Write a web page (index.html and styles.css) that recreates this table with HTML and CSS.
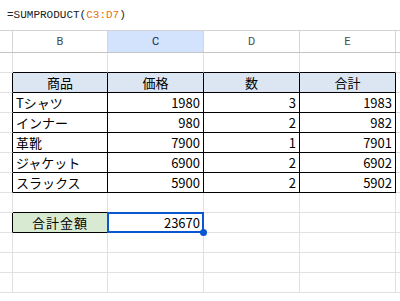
FILE: index.html
```html
<!DOCTYPE html>
<html lang="ja">
<head>
    <meta charset="UTF-8">
    <title>SUMPRODUCT</title>
    <link rel="stylesheet" href="styles.css">
</head>
<body>

    <!-- Formula bar -->
    <div class="formula-bar">
        <span>=SUMPRODUCT(</span><span class="ref">C3:D7</span><span>)</span>
    </div>

    <!-- Column headers -->
    <div class="row col-head">
        <div class="cell gutter"></div>
        <div class="cell">B</div>
        <div class="cell active">C</div>
        <div class="cell">D</div>
        <div class="cell">E</div>
        <div class="cell"></div>
    </div>

    <div class="row">
        <div class="cell gutter"></div>
        <div class="cell edge-b"></div>
        <div class="cell edge-b"></div>
        <div class="cell edge-b"></div>
        <div class="cell edge-b"></div>
        <div class="cell"></div>
    </div>

    <!-- Price table -->
    <div class="row">
        <div class="cell gutter edge-r"></div>
        <div class="cell tb th">商品</div>
        <div class="cell tb th">価格</div>
        <div class="cell tb th">数</div>
        <div class="cell tb th">合計</div>
        <div class="cell"></div>
    </div>
    <div class="row">
        <div class="cell gutter edge-r"></div>
        <div class="cell tb">Tシャツ</div>
        <div class="cell tb num">1980</div>
        <div class="cell tb num">3</div>
        <div class="cell tb num">1983</div>
        <div class="cell"></div>
    </div>
    <div class="row">
        <div class="cell gutter edge-r"></div>
        <div class="cell tb">インナー</div>
        <div class="cell tb num">980</div>
        <div class="cell tb num">2</div>
        <div class="cell tb num">982</div>
        <div class="cell"></div>
    </div>
    <div class="row">
        <div class="cell gutter edge-r"></div>
        <div class="cell tb">革靴</div>
        <div class="cell tb num">7900</div>
        <div class="cell tb num">1</div>
        <div class="cell tb num">7901</div>
        <div class="cell"></div>
    </div>
    <div class="row">
        <div class="cell gutter edge-r"></div>
        <div class="cell tb">ジャケット</div>
        <div class="cell tb num">6900</div>
        <div class="cell tb num">2</div>
        <div class="cell tb num">6902</div>
        <div class="cell"></div>
    </div>
    <div class="row">
        <div class="cell gutter edge-r"></div>
        <div class="cell tb">スラックス</div>
        <div class="cell tb num">5900</div>
        <div class="cell tb num">2</div>
        <div class="cell tb num">5902</div>
        <div class="cell"></div>
    </div>

    <div class="row">
        <div class="cell gutter"></div>
        <div class="cell edge-b"></div>
        <div class="cell"></div>
        <div class="cell"></div>
        <div class="cell"></div>
        <div class="cell"></div>
    </div>

    <!-- Total -->
    <div class="row">
        <div class="cell gutter edge-r"></div>
        <div class="cell tb total-label">合計金額</div>
        <div class="cell num selected">23670</div>
        <div class="cell"></div>
        <div class="cell"></div>
        <div class="cell"></div>
    </div>

    <div class="row">
        <div class="cell gutter"></div>
        <div class="cell"></div>
        <div class="cell"></div>
        <div class="cell"></div>
        <div class="cell"></div>
        <div class="cell"></div>
    </div>
    <div class="row">
        <div class="cell gutter"></div>
        <div class="cell"></div>
        <div class="cell"></div>
        <div class="cell"></div>
        <div class="cell"></div>
        <div class="cell"></div>
    </div>
    <div class="row">
        <div class="cell gutter"></div>
        <div class="cell"></div>
        <div class="cell"></div>
        <div class="cell"></div>
        <div class="cell"></div>
        <div class="cell"></div>
    </div>

</body>
</html>
```

FILE: styles.css
```css
body {
    margin: 0;
    background: #fff;
    font-family: 'Noto Sans CJK JP', sans-serif;
    overflow: hidden;
}
.formula-bar {
    height: 31px;
    box-sizing: border-box;
    border-bottom: 1px solid #d3d3d3;
    padding: 0 0 0 7px;
    display: flex;
    align-items: center;
    font-family: 'Liberation Mono', monospace;
    font-size: 11px;
    color: #202124;
}
.formula-bar .ref {
    color: #e8710a;
}
.row {
    display: grid;
    grid-template-columns: 13px 95px 96px 96px 96px 1fr;
    height: 20px;
}
.cell {
    box-sizing: border-box;
    border-right: 1px solid #e1e1e1;
    border-bottom: 1px solid #e1e1e1;
    display: flex;
    align-items: center;
    padding: 0 3px;
    font-size: 13px;
    color: #000;
    white-space: nowrap;
    position: relative;
}
.gutter {
    padding: 0;
}
.col-head {
    height: 22px;
}
.col-head .cell {
    justify-content: center;
    font-family: Roboto, sans-serif;
    font-size: 11px;
    color: #444746;
    border-right-color: #d5d5d5;
    border-bottom-color: #c4c4c4;
}
.col-head .active {
    background: #d3e3fd;
    color: #0b1f44;
}
.edge-b {
    border-bottom-color: #000;
}
.edge-r {
    border-right-color: #000;
}
.tb {
    border-right-color: #000;
    border-bottom-color: #000;
}
.th {
    background: #dce6f2;
    justify-content: center;
}
.num {
    justify-content: flex-end;
}
.total-label {
    background: #d9ead3;
    justify-content: center;
    letter-spacing: 1px;
}
/* selected cell frame and fill handle */
.selected::after {
    content: '';
    position: absolute;
    left: -1px;
    top: -1px;
    right: -1px;
    bottom: -1px;
    border: 2px solid #0b57d0;
}
.selected::before {
    content: '';
    position: absolute;
    right: -4px;
    bottom: -4px;
    width: 7px;
    height: 7px;
    border-radius: 50%;
    background: #0b57d0;
    z-index: 1;
}
```
